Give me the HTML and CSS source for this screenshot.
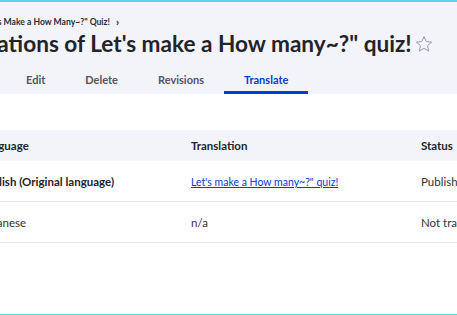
FILE: index.html
```html
<!DOCTYPE html>
<html lang="en">
<head>
<meta charset="UTF-8">
<meta name="viewport" content="width=device-width, initial-scale=1.0">
<title>Translations</title>
<link rel="stylesheet" href="styles.css">
</head>
<body>
<div class="frame">
    <div class="page">
        <div class="header">
            <nav class="breadcrumb">
                <a href="#">Let's Make a How Many~?" Quiz!</a>
                <span class="sep">&rsaquo;</span>
            </nav>
            <h1 class="title">
                Translations of Let's make a How many~?" quiz!
                <svg class="star" viewBox="0 0 20 20" width="18" height="18">
                    <path d="M10 1.8l2.45 5.6 6.05.55-4.6 4 1.38 5.95L10 14.8l-5.28 3.1 1.38-5.95-4.6-4 6.05-.55z" fill="none" stroke="#8e929c" stroke-width="1"/>
                </svg>
            </h1>
            <ul class="tabs">
                <li><a href="#" class="tab">View</a></li>
                <li><a href="#" class="tab">Edit</a></li>
                <li><a href="#" class="tab">Delete</a></li>
                <li><a href="#" class="tab">Revisions</a></li>
                <li><a href="#" class="tab active">Translate</a></li>
            </ul>
        </div>

        <table class="translations">
            <colgroup>
                <col class="col-lang">
                <col class="col-trans">
                <col class="col-status">
            </colgroup>
            <thead>
                <tr>
                    <th>Language</th>
                    <th>Translation</th>
                    <th>Status</th>
                </tr>
            </thead>
            <tbody>
                <tr>
                    <td class="strong">English (Original language)</td>
                    <td><a href="#" class="link">Let's make a How many~?" quiz!</a></td>
                    <td>Published</td>
                </tr>
                <tr>
                    <td>Japanese</td>
                    <td>n/a</td>
                    <td>Not translated</td>
                </tr>
            </tbody>
        </table>
    </div>
</div>
</body>
</html>
```

FILE: styles.css
```css
body {
    margin: 0;
    font-family: Lato, "Noto Sans", sans-serif;
    color: #232429;
    background-color: #fff;
    overflow: hidden;
}
.frame {
    height: 315px;
    box-sizing: border-box;
    border-top: 2px solid #5bd2ee;
    border-bottom: 1px solid #5bd2ee;
    overflow: hidden;
}
.page {
    margin-left: -100px;
    width: 700px;
}
.header {
    background-color: #f3f4f9;
    padding-top: 13px;
}
.breadcrumb {
    padding-left: 84px;
    font-size: 8.6px;
    font-weight: 700;
    line-height: 14px;
    display: flex;
    align-items: center;
    gap: 6px;
}
.breadcrumb a {
    color: #2b2c33;
    text-decoration: none;
}
.breadcrumb .sep {
    font-size: 11px;
}
.title {
    margin: 0;
    padding-left: 38px;
    font-size: 22.6px;
    font-weight: 700;
    line-height: 30px;
    display: flex;
    align-items: center;
    gap: 3px;
    white-space: nowrap;
}
.star {
    flex: none;
}
.tabs {
    list-style: none;
    margin: 6px 0 0;
    padding: 0 0 0 41px;
    display: flex;
}
.tab {
    display: block;
    padding: 4px 20px 0;
    height: 29px;
    line-height: 22px;
    font-size: 11px;
    font-weight: 700;
    color: #545560;
    text-decoration: none;
    border-bottom: 3px solid transparent;
    box-sizing: border-box;
}
.tab.active {
    color: #003ecc;
    border-bottom-color: #003ecc;
}
.translations {
    margin-top: 36px;
    margin-left: 64px;
    border-collapse: collapse;
    table-layout: fixed;
    width: 600px;
    font-size: 11.5px;
}
.col-lang {
    width: 211px;
}
.col-trans {
    width: 230px;
}
.translations th {
    background-color: #f3f4f9;
    text-align: left;
    font-weight: 700;
    height: 31px;
    padding: 0 16px;
}
.translations td {
    height: 40px;
    padding: 0 16px;
    border-bottom: 1px solid #e6e7ec;
    color: #333;
    white-space: nowrap;
}
.translations td.strong {
    font-weight: 700;
    color: #232429;
}
.link {
    color: #003ecc;
    font-size: 10.5px;
}
```
